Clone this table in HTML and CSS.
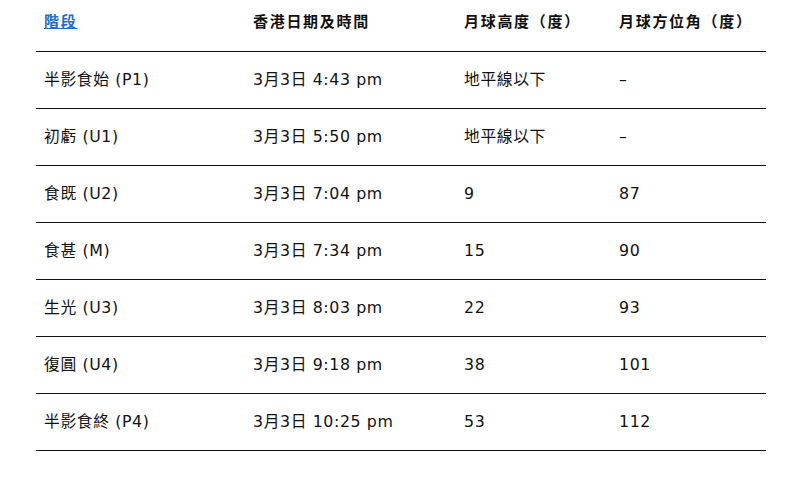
FILE: index.html
```html
<!DOCTYPE html>
<html lang="zh-Hant">
<head>
<meta charset="utf-8">
<link rel="stylesheet" href="styles.css">
</head>
<body>
<table class="eclipse">
  <thead>
    <tr>
      <th class="c1"><a href="#" class="sort">階段</a></th>
      <th class="c2">香港日期及時間</th>
      <th class="c3">月球高度（度）</th>
      <th class="c4">月球方位角（度）</th>
    </tr>
  </thead>
  <tbody>
    <tr><td>半影食始 (P1)</td><td>3月3日 4:43 pm</td><td>地平線以下</td><td>–</td></tr>
    <tr><td>初虧 (U1)</td><td>3月3日 5:50 pm</td><td>地平線以下</td><td>–</td></tr>
    <tr><td>食既 (U2)</td><td>3月3日 7:04 pm</td><td>9</td><td>87</td></tr>
    <tr><td>食甚 (M)</td><td>3月3日 7:34 pm</td><td>15</td><td>90</td></tr>
    <tr><td>生光 (U3)</td><td>3月3日 8:03 pm</td><td>22</td><td>93</td></tr>
    <tr><td>復圓 (U4)</td><td>3月3日 9:18 pm</td><td>38</td><td>101</td></tr>
    <tr><td>半影食終 (P4)</td><td>3月3日 10:25 pm</td><td>53</td><td>112</td></tr>
  </tbody>
</table>
</body>
</html>
```
FILE: styles.css
```css
html, body {
  margin: 0;
  padding: 0;
  background: #ffffff;
}
body {
  padding: 0 21px 0 36px;
  font-family: "DejaVu Sans", "Noto Sans CJK TC", sans-serif;
  font-size: 16px;
  color: #111111;
}
.eclipse {
  width: 730px;
  border-collapse: collapse;
  table-layout: fixed;
}
.eclipse th {
  text-align: left;
  font-family: "Noto Sans CJK TC", sans-serif;
  font-weight: 700;
  font-size: 15px;
  letter-spacing: 1.7px;
  height: 51px;
  padding: 0 8px 9px;
  box-sizing: border-box;
  vertical-align: middle;
  border-bottom: 1px solid #111111;
}
.eclipse td {
  height: 57px;
  padding: 0 8px 0;
  box-sizing: border-box;
  vertical-align: middle;
  border-bottom: 1px solid #111111;
  font-size: 15.8px;
  line-height: 20px;
  letter-spacing: 0.6px;
}
.c1 { width: 209px; }
.c2 { width: 211px; }
.c3 { width: 155px; }
.c4 { width: 155px; }
.sort {
  color: #1e6fc8;
  text-decoration: underline;
}
```
